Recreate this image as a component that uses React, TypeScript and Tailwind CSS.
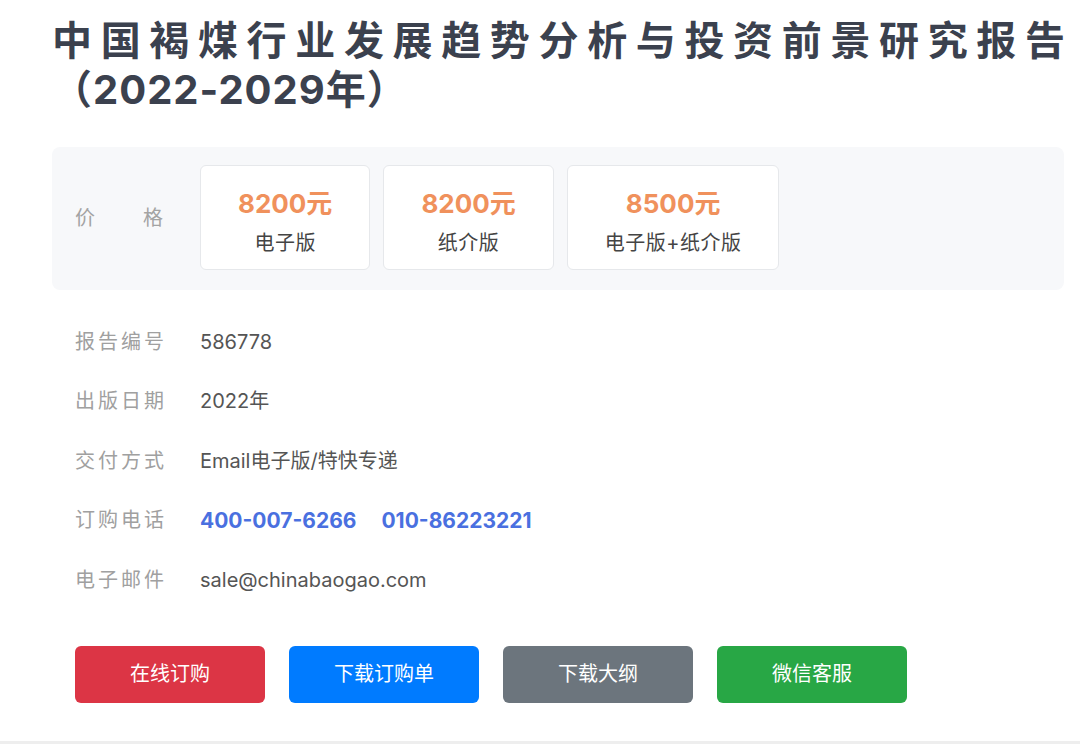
const font = { fontFamily: 'Inter, "Noto Sans CJK SC", sans-serif' };

const prices = [
  { price: "8200元", label: "电子版" },
  { price: "8200元", label: "纸介版" },
  { price: "8500元", label: "电子版+纸介版" },
];

const rows = [
  { label: "报告编号", value: "586778" },
  { label: "出版日期", value: "2022年" },
  { label: "交付方式", value: "Email电子版/特快专递" },
  { label: "订购电话", value: "phones" },
  { label: "电子邮件", value: "sale@chinabaogao.com" },
];

const buttons = [
  { text: "在线订购", cls: "bg-[#dc3545]" },
  { text: "下载订购单", cls: "bg-[#007bff]" },
  { text: "下载大纲", cls: "bg-[#6c757d]" },
  { text: "微信客服", cls: "bg-[#28a745]" },
];

export default function App() {
  return (
    <div className="w-[1080px] h-[744px] bg-white flex flex-col overflow-hidden" style={font}>
      <div className="pl-[52px] pr-[14px] flex-1">
        {/* Title */}
        <h1 className="pt-[16px] text-[40px] leading-[49px] font-bold tracking-[1px] text-justify text-[#3b414e]">
          中国褐煤行业发展趋势分析与投资前景研究报告（2022-2029年）
        </h1>

        {/* Price block */}
        <div className="mt-[33px] mr-[2px] rounded-lg bg-[#f7f8fa] pt-[18px] pb-[20px] pl-[23px] flex items-center">
          <div className="w-[125px] shrink-0">
            <div className="w-[88px] flex justify-between text-[20px] text-[#a3a3a3]">
              <span>价</span>
              <span>格</span>
            </div>
          </div>
          <div className="flex gap-[13px]">
            {prices.map((p, i) => (
              <div
                key={i}
                className="h-[105px] px-[37px] rounded-md border border-[#e6e8eb] bg-white flex flex-col items-center pt-[22px]"
              >
                <div className="text-[26px] leading-[32px] font-bold text-[#f0915c]">{p.price}</div>
                <div className="mt-[9px] text-[20px] leading-[28px] tracking-[0.5px] text-[#444]">{p.label}</div>
              </div>
            ))}
          </div>
        </div>

        {/* Info rows */}
        <div className="mt-[22px] pl-[23px]">
          {rows.map((r, i) => (
            <div key={i} className="h-[59.5px] flex items-center text-[20px]">
              <div className="w-[125px] shrink-0 tracking-[3px] text-[#a0a0a0]">{r.label}</div>
              {r.value === "phones" ? (
                <div className="flex gap-[25px] text-[21px] font-bold text-[#4a70e0]">
                  <span>400-007-6266</span>
                  <span>010-86223221</span>
                </div>
              ) : (
                <div className="text-[#555]">{r.value}</div>
              )}
            </div>
          ))}
        </div>

        {/* Buttons */}
        <div className="mt-[36px] pl-[23px] flex gap-[24px]">
          {buttons.map((b, i) => (
            <button
              key={i}
              className={`${b.cls} w-[190px] h-[57px] rounded-md text-white text-[20px] flex items-center justify-center`}
            >
              {b.text}
            </button>
          ))}
        </div>
      </div>
      <div className="h-[3px] bg-[#eeeeee]" />
    </div>
  );
}
